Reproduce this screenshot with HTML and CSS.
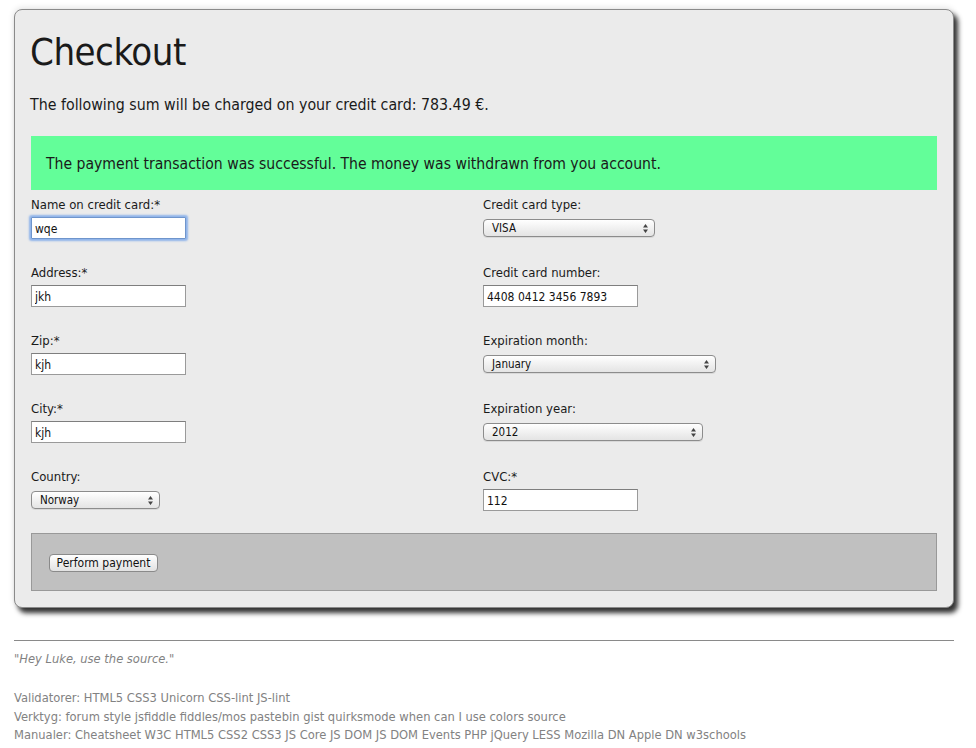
FILE: index.html
```html
<!DOCTYPE html>
<html>
<head>
<meta charset="utf-8">
<title>Checkout</title>
<link rel="stylesheet" href="styles.css">
</head>
<body>
<div class="page">
  <div class="card">
    <h1 class="title">Checkout</h1>
    <p class="sum">The following sum will be charged on your credit card: 783.49 €.</p>
    <div class="success">The payment transaction was successful. The money was withdrawn from you account.</div>
    <form class="form">
      <div class="cols">
        <div class="col">
          <div class="field">
            <label class="lbl">Name on credit card:*</label>
            <input class="txt focus" type="text" value="wqe">
          </div>
          <div class="field">
            <label class="lbl">Address:*</label>
            <input class="txt" type="text" value="jkh">
          </div>
          <div class="field">
            <label class="lbl">Zip:*</label>
            <input class="txt" type="text" value="kjh">
          </div>
          <div class="field">
            <label class="lbl">City:*</label>
            <input class="txt" type="text" value="kjh">
          </div>
          <div class="field">
            <label class="lbl">Country:</label>
            <div class="sel w-country">Norway<svg class="arr" viewBox="0 0 5 9" width="5" height="9"><path d="M0 3.5 L2.5 0 L5 3.5 Z M0 5.5 L2.5 9 L5 5.5 Z" fill="#444"/></svg></div>
          </div>
        </div>
        <div class="col">
          <div class="field">
            <label class="lbl">Credit card type:</label>
            <div class="sel w-type">VISA<svg class="arr" viewBox="0 0 5 9" width="5" height="9"><path d="M0 3.5 L2.5 0 L5 3.5 Z M0 5.5 L2.5 9 L5 5.5 Z" fill="#444"/></svg></div>
          </div>
          <div class="field">
            <label class="lbl">Credit card number:</label>
            <input class="txt" type="text" value="4408 0412 3456 7893">
          </div>
          <div class="field">
            <label class="lbl">Expiration month:</label>
            <div class="sel w-month">January<svg class="arr" viewBox="0 0 5 9" width="5" height="9"><path d="M0 3.5 L2.5 0 L5 3.5 Z M0 5.5 L2.5 9 L5 5.5 Z" fill="#444"/></svg></div>
          </div>
          <div class="field">
            <label class="lbl">Expiration year:</label>
            <div class="sel w-year">2012<svg class="arr" viewBox="0 0 5 9" width="5" height="9"><path d="M0 3.5 L2.5 0 L5 3.5 Z M0 5.5 L2.5 9 L5 5.5 Z" fill="#444"/></svg></div>
          </div>
          <div class="field">
            <label class="lbl">CVC:*</label>
            <input class="txt" type="text" value="112">
          </div>
        </div>
      </div>
      <div class="actions">
        <button class="btn" type="button">Perform payment</button>
      </div>
    </form>
  </div>
  <footer class="footer">
    <p class="quote">"Hey Luke, use the source."</p>
    <div class="links">
      <div>Validatorer: HTML5 CSS3 Unicorn CSS-lint JS-lint</div>
      <div>Verktyg: forum style jsfiddle fiddles/mos pastebin gist quirksmode when can I use colors source</div>
      <div>Manualer: Cheatsheet W3C HTML5 CSS2 CSS3 JS Core JS DOM JS DOM Events PHP jQuery LESS Mozilla DN Apple DN w3schools</div>
    </div>
  </footer>
</div>
</body>
</html>
```

FILE: styles.css
```css
html, body {
  margin: 0;
  padding: 0;
  background: #ffffff;
}
body {
  font-family: "DejaVu Sans", Verdana, sans-serif;
  font-stretch: condensed;
  color: #1a1a1a;
}
.page {
  padding: 9px 22px 0 14px;
}
.card {
  background: #ebebeb;
  border: 1px solid #8a8a8a;
  border-radius: 8px;
  box-shadow: 4px 5px 5px #333333, 0 -1px 6px rgba(0,0,0,0.12);
  padding: 1px 16px 16px 16px;
}
.title {
  font-size: 38px;
  font-weight: normal;
  margin: 18px 0 0 -1px;
  line-height: 46px;
  letter-spacing: -0.5px;
}
.sum {
  font-size: 15.8px;
  margin: 20px 0 0 -1px;
  line-height: 20px;
}
.success {
  background: #63fe99;
  margin-top: 21px;
  height: 54px;
  line-height: 56px;
  padding-left: 15px;
  font-size: 15.6px;
}
.form {
  margin-top: 7px;
}
.cols {
  display: grid;
  grid-template-columns: 452px 1fr;
}
.col {
  display: flex;
  flex-direction: column;
  gap: 26px;
}
.field {
  display: flex;
  flex-direction: column;
  align-items: flex-start;
}
.lbl {
  font-size: 13px;
  line-height: 16px;
  height: 16px;
  margin-bottom: 4px;
}
.txt {
  box-sizing: border-box;
  width: 155px;
  height: 22px;
  margin: 0;
  border: 1px solid #9a9a9a;
  border-top-color: #7e7e7e;
  background: #ffffff;
  font-family: "DejaVu Sans", Verdana, sans-serif;
  font-stretch: condensed;
  font-size: 12px;
  padding: 1px 3px 0 3px;
  color: #111;
  outline: none;
}
.txt.focus {
  border-color: #6f95cc;
  box-shadow: 0 0 2px 2px #8fb4ea;
  border-radius: 1px;
}
.sel {
  box-sizing: border-box;
  position: relative;
  height: 18px;
  margin: 2px 0;
  border: 1px solid #8c8c8c;
  border-radius: 4px;
  background: linear-gradient(#ffffff, #f1f1f1 50%, #e4e4e4);
  font-size: 11.5px;
  line-height: 16px;
  padding-left: 8px;
  color: #111;
  box-shadow: 0 1px 0 rgba(0,0,0,0.08);
}
.arr {
  position: absolute;
  right: 6px;
  top: 3.5px;
  display: block;
}
.w-country { width: 129px; }
.w-type { width: 172px; }
.w-month { width: 233px; }
.w-year { width: 220px; }
.actions {
  margin-top: 22px;
  background: #c0c0c0;
  border: 1px solid #999999;
  padding: 20px 17px 18px 17px;
}
.btn {
  box-sizing: border-box;
  height: 18px;
  width: 109px;
  padding: 0;
  border: 1px solid #8a8a8a;
  border-radius: 4px;
  background: linear-gradient(#ffffff, #f0f0f0 50%, #e2e2e2);
  font-family: "DejaVu Sans", Verdana, sans-serif;
  font-stretch: condensed;
  font-size: 12px;
  color: #111;
  line-height: 15px;
  display: block;
}
.footer {
  margin-top: 32px;
  border-top: 1px solid #8a8a8a;
  color: #828282;
  font-size: 12.8px;
}
.quote {
  font-style: italic;
  margin: 10px 0 0 0;
  line-height: 16px;
}
.links {
  margin-top: 22px;
  line-height: 18.5px;
}
```
